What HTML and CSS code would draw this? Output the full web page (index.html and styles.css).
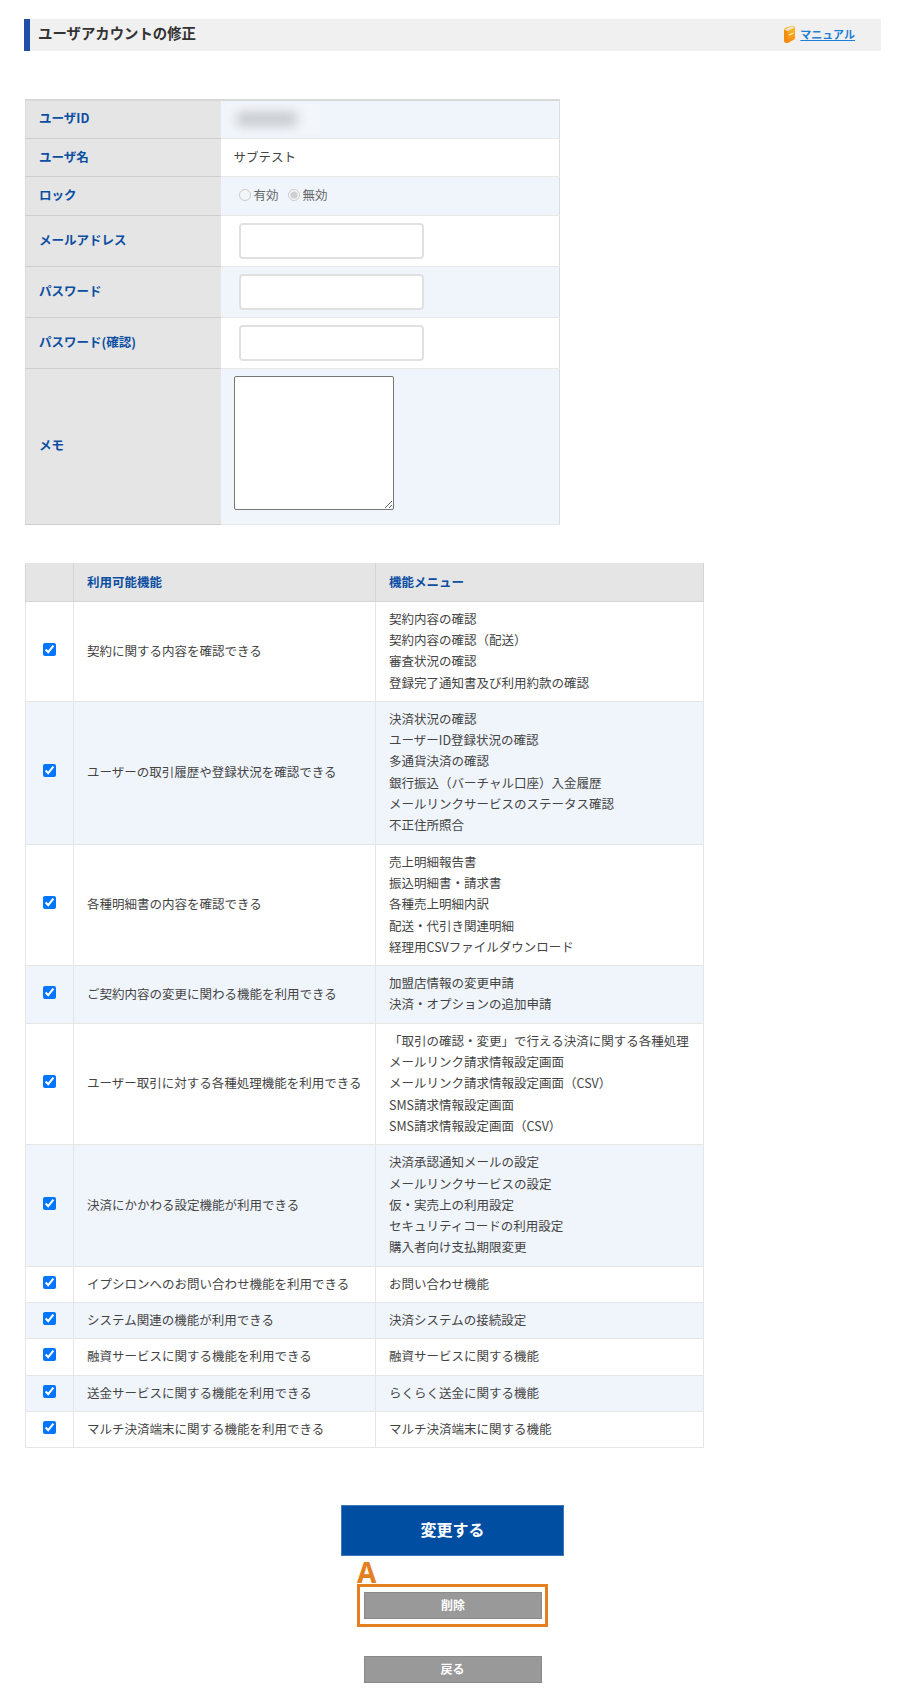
FILE: index.html
```html
<!DOCTYPE html>
<html lang="ja">
<head>
<meta charset="utf-8">
<title>ユーザアカウントの修正</title>
<link rel="stylesheet" href="styles.css">
</head>
<body>
<main class="page">
  <header class="title-bar">
    <h1 class="title">ユーザアカウントの修正</h1>
    <a class="manual" href="#">
      <svg class="book" width="13" height="19" viewBox="0 0 13 19" aria-hidden="true">
        <defs>
          <linearGradient id="book-face" x1="0" y1="0" x2="0" y2="1">
            <stop offset="0" stop-color="#ffc02e"/>
            <stop offset="1" stop-color="#f7860f"/>
          </linearGradient>
        </defs>
        <path d="M1 5 Q1 3 3 2.5 L9 0.8 Q11.5 0.5 12 2.5 L12 13 Q12 14 11 14.5 L5 18 Q1.5 18.5 1 16 Z" fill="url(#book-face)"/>
        <path d="M1.5 4.5 L9 1.2 L11.5 2.4 L4.5 6 Z" fill="#e9e4d2"/>
        <path d="M1 5 L4.5 6.2 L4.5 17.6 Q1.5 18 1 16 Z" fill="#ef8c12"/>
        <path d="M6 10 L10.5 8" stroke="#fff3c8" stroke-width="1.2"/>
      </svg>
      <span>マニュアル</span>
    </a>
  </header>

  <table class="form-table">
    <tr class="row-s alt"><th>ユーザID</th><td><div class="masked"><div class="masked-blob"></div></div></td></tr>
    <tr class="row-s"><th>ユーザ名</th><td class="value">サブテスト</td></tr>
    <tr class="row-s alt"><th>ロック</th><td>
      <div class="radios">
        <label class="radio"><input type="radio" name="lock" disabled>有効</label>
        <label class="radio"><input type="radio" name="lock" checked disabled>無効</label>
      </div>
    </td></tr>
    <tr class="row-m"><th>メールアドレス</th><td><input class="text" type="text"></td></tr>
    <tr class="row-m alt"><th>パスワード</th><td><input class="text" type="password"></td></tr>
    <tr class="row-m"><th>パスワード(確認)</th><td><input class="text" type="password"></td></tr>
    <tr class="row-l alt"><th>メモ</th><td class="memo-cell"><textarea class="memo"></textarea></td></tr>
  </table>

  <table class="perm-table">
    <colgroup><col class="c1"><col class="c2"><col class="c3"></colgroup>
    <thead><tr><th></th><th>利用可能機能</th><th>機能メニュー</th></tr></thead>
    <tbody>
      <tr><td class="chk"><input type="checkbox" checked></td><td>契約に関する内容を確認できる</td>
        <td>契約内容の確認<br>契約内容の確認（配送）<br>審査状況の確認<br>登録完了通知書及び利用約款の確認</td></tr>
      <tr class="alt"><td class="chk"><input type="checkbox" checked></td><td>ユーザーの取引履歴や登録状況を確認できる</td>
        <td>決済状況の確認<br>ユーザーID登録状況の確認<br>多通貨決済の確認<br>銀行振込（バーチャル口座）入金履歴<br>メールリンクサービスのステータス確認<br>不正住所照合</td></tr>
      <tr><td class="chk"><input type="checkbox" checked></td><td>各種明細書の内容を確認できる</td>
        <td>売上明細報告書<br>振込明細書・請求書<br>各種売上明細内訳<br>配送・代引き関連明細<br>経理用CSVファイルダウンロード</td></tr>
      <tr class="alt"><td class="chk"><input type="checkbox" checked></td><td>ご契約内容の変更に関わる機能を利用できる</td>
        <td>加盟店情報の変更申請<br>決済・オプションの追加申請</td></tr>
      <tr><td class="chk"><input type="checkbox" checked></td><td>ユーザー取引に対する各種処理機能を利用できる</td>
        <td>「取引の確認・変更」で行える決済に関する各種処理<br>メールリンク請求情報設定画面<br>メールリンク請求情報設定画面（CSV）<br>SMS請求情報設定画面<br>SMS請求情報設定画面（CSV）</td></tr>
      <tr class="alt"><td class="chk"><input type="checkbox" checked></td><td>決済にかかわる設定機能が利用できる</td>
        <td>決済承認通知メールの設定<br>メールリンクサービスの設定<br>仮・実売上の利用設定<br>セキュリティコードの利用設定<br>購入者向け支払期限変更</td></tr>
      <tr><td class="chk"><input type="checkbox" checked></td><td>イプシロンへのお問い合わせ機能を利用できる</td><td>お問い合わせ機能</td></tr>
      <tr class="alt"><td class="chk"><input type="checkbox" checked></td><td>システム関連の機能が利用できる</td><td>決済システムの接続設定</td></tr>
      <tr><td class="chk"><input type="checkbox" checked></td><td>融資サービスに関する機能を利用できる</td><td>融資サービスに関する機能</td></tr>
      <tr class="alt"><td class="chk"><input type="checkbox" checked></td><td>送金サービスに関する機能を利用できる</td><td>らくらく送金に関する機能</td></tr>
      <tr><td class="chk"><input type="checkbox" checked></td><td>マルチ決済端末に関する機能を利用できる</td><td>マルチ決済端末に関する機能</td></tr>
    </tbody>
  </table>

  <div class="actions">
    <button class="btn-primary" type="button">変更する</button>
    <div class="highlight">
      <span class="marker">A</span>
      <button class="btn-sub" type="button">削除</button>
    </div>
    <button class="btn-sub btn-back" type="button">戻る</button>
  </div>
</main>
</body>
</html>
```
FILE: styles.css
```css
* { box-sizing: border-box; }
html, body { margin: 0; padding: 0; background: #fff; }
body {
  font-family: "Noto Sans CJK JP", "Noto Sans", sans-serif;
  font-size: 12.5px;
  color: #444;
}
.page { padding: 19px 29px 20px 24px; }

.title-bar {
  display: flex;
  align-items: center;
  justify-content: space-between;
  height: 32px;
  background: #f0f0f0;
  border-left: 6px solid #1f4fa8;
  padding: 0 26px 0 8px;
}
.title { margin: 0 0 3px; font-size: 14.4px; font-weight: 700; color: #333; line-height: 1; }
.manual { display: flex; align-items: center; gap: 4px; font-size: 11px; font-weight: 700; color: #1f7fd6; padding-bottom: 1px; }
.book { display: block; }
.manual span { margin-bottom: 1px; }

.form-table {
  width: 535px;
  margin: 48px 0 0 1px;
  border-collapse: collapse;
  table-layout: fixed;
  border: 1px solid #dcdcdc;
  border-top: 2px solid #d8d8d8;
}
.form-table th {
  width: 195px;
  background: #e5e5e5;
  color: #0b4ea2;
  font-weight: 700;
  text-align: left;
  padding: 0 0 3px 13px;
  border-bottom: 1px solid #cfcfcf;
}
.form-table td {
  padding: 0 0 0 13px;
  border-bottom: 1px solid #e8e8e8;
  background: #fff;
}
.form-table .alt td { background: #f0f5fc; }
.form-table .value { padding-bottom: 3px; }
.row-s { height: 38.4px; }
.row-m { height: 51px; }
.row-l { height: 156px; }
.form-table .memo-cell { vertical-align: top; padding-top: 7px; }

.masked { height: 30px; width: 92px; margin-left: -6px; overflow: hidden; background: #f3f6fb; }
.masked-blob { width: 60px; height: 14px; margin: 8px 0 0 9px; background: #c4c8cd; filter: blur(6px); }
.radios { display: flex; align-items: center; gap: 9px; padding: 0 0 3px 5px; font-size: 12.5px; color: #666; }
.radio { display: flex; align-items: center; gap: 3px; }
.radio input { margin: 2px 0 0; width: 12px; height: 12px; }
.text {
  display: block;
  width: 185px;
  height: 36px;
  margin-left: 5px;
  background: #fff;
  border: 2px solid #e0e0e0;
  border-radius: 4px;
}
.memo {
  display: block;
  width: 160px;
  height: 134px;
  margin: 0;
  background: #fff;
  border: 1px solid #767676;
  border-radius: 2px;
}

.perm-table {
  width: 678px;
  margin: 38px 0 0 1px;
  border-collapse: collapse;
  table-layout: fixed;
  line-height: 21.3px;
}
.c1 { width: 48px; }
.c2 { width: 302px; }
.c3 { width: 328px; }
.perm-table th {
  height: 38px;
  background: #e5e5e5;
  color: #0b4ea2;
  font-weight: 700;
  text-align: left;
  padding: 0 0 2px 13px;
  border: 1px solid #d4d4d4;
  border-top: 1px solid #e5e5e5;
}
.perm-table td {
  padding: 6px 0 8px 13px;
  border: 1px solid #e6e6e6;
  border-width: 0 1px 1px;
  color: #444;
}
.perm-table .alt td { background: #f0f5fc; }
.perm-table .chk { padding: 0 0 8px; text-align: center; }
.chk input { display: inline-block; vertical-align: middle; margin: 0; width: 13px; height: 13px; }

.actions { display: flex; flex-direction: column; align-items: center; width: 857px; margin-top: 57px; }
.btn-primary {
  width: 223px;
  height: 51px;
  margin: 0;
  padding: 0 0 3px;
  background: #004ea2;
  border: 1px solid #3f78b8;
  color: #fff;
  font: 700 16px "Noto Sans CJK JP", sans-serif;
}
.highlight {
  position: relative;
  width: 191px;
  height: 43px;
  margin-top: 28px;
  border: 3px solid #e37f1e;
  padding: 5px 4px;
}
.marker {
  position: absolute;
  left: -3px;
  top: -28px;
  font: 700 28px/27px "Noto Sans", sans-serif;
  color: #e37f1e;
}
.btn-sub {
  display: block;
  width: 178px;
  height: 27px;
  margin: 0;
  padding: 0 0 2px;
  background: #999;
  border: 1px solid #8a8a8a;
  color: #fff;
  font: 700 12px "Noto Sans CJK JP", sans-serif;
}
.btn-back { margin-top: 29px; }
```
